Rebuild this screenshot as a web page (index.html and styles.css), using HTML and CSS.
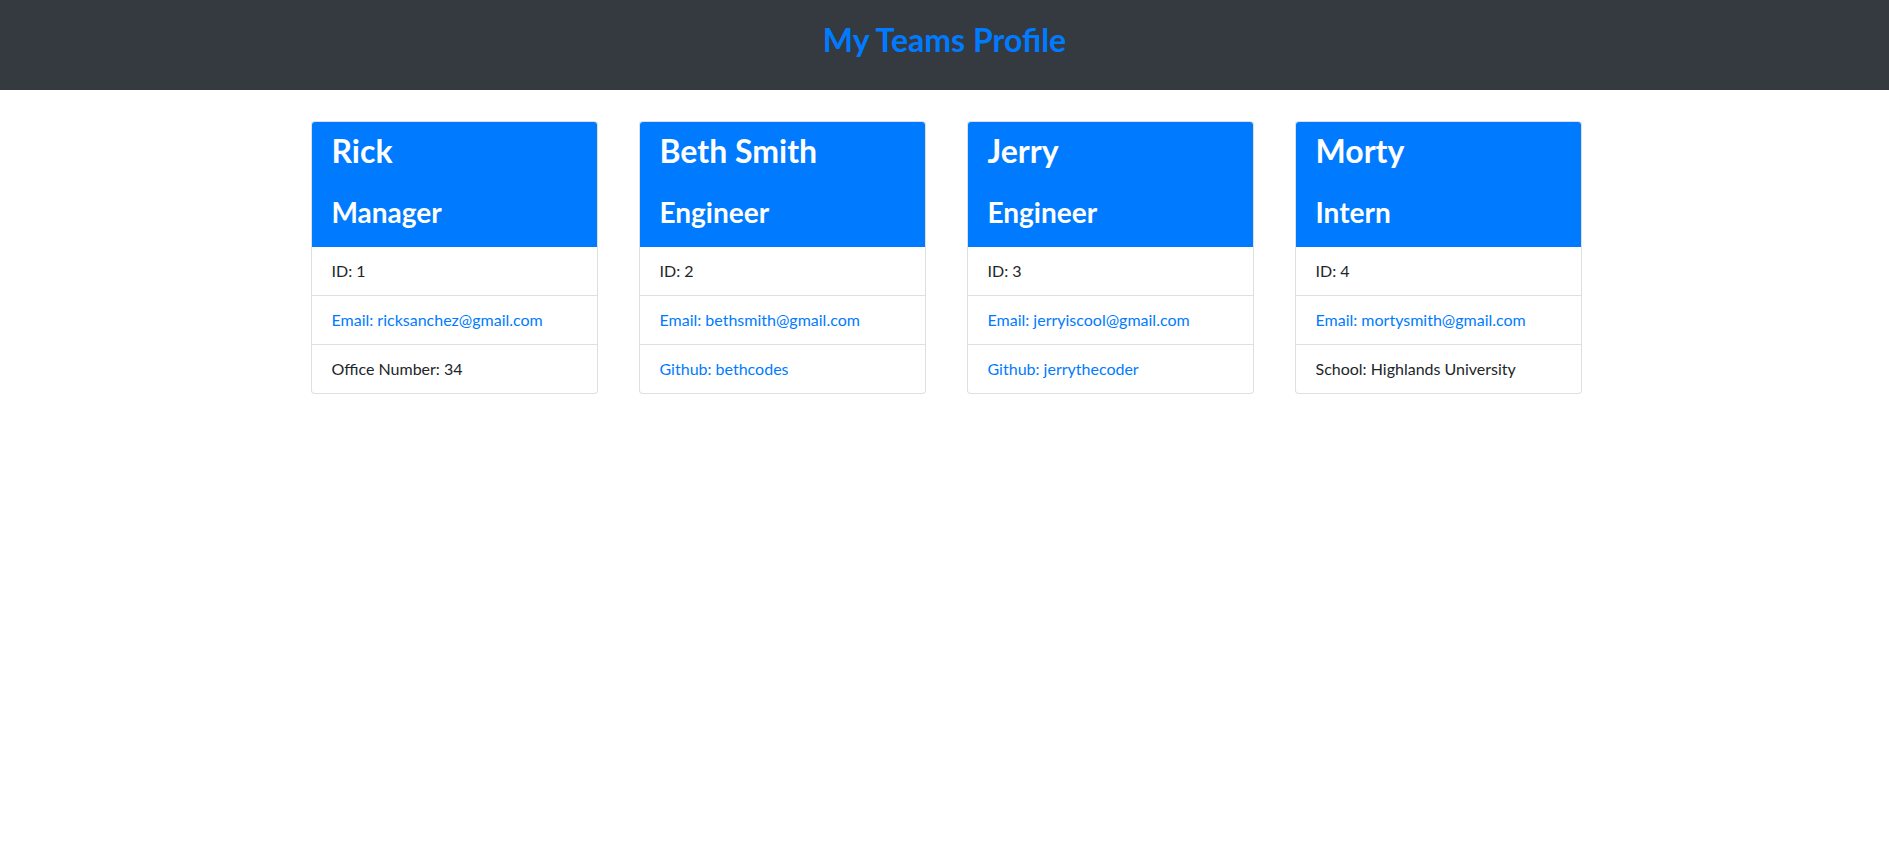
FILE: index.html
```html
<!DOCTYPE html>
<html lang="en">
<head>
<meta charset="UTF-8">
<title>My Teams Profile</title>
<link rel="stylesheet" href="styles.css">
</head>
<body>
<header class="topbar">
  <h1 class="topbar-title">My Teams Profile</h1>
</header>
<main class="team">
  <div class="card">
    <div class="card-head">
      <h2 class="card-name">Rick</h2>
      <h3 class="card-role">Manager</h3>
    </div>
    <ul class="card-list">
      <li class="card-item">ID: 1</li>
      <li class="card-item"><a class="card-link" href="#">Email: ricksanchez@gmail.com</a></li>
      <li class="card-item">Office Number: 34</li>
    </ul>
  </div>
  <div class="card">
    <div class="card-head">
      <h2 class="card-name">Beth Smith</h2>
      <h3 class="card-role">Engineer</h3>
    </div>
    <ul class="card-list">
      <li class="card-item">ID: 2</li>
      <li class="card-item"><a class="card-link" href="#">Email: bethsmith@gmail.com</a></li>
      <li class="card-item"><a class="card-link" href="#">Github: bethcodes</a></li>
    </ul>
  </div>
  <div class="card">
    <div class="card-head">
      <h2 class="card-name">Jerry</h2>
      <h3 class="card-role">Engineer</h3>
    </div>
    <ul class="card-list">
      <li class="card-item">ID: 3</li>
      <li class="card-item"><a class="card-link" href="#">Email: jerryiscool@gmail.com</a></li>
      <li class="card-item"><a class="card-link" href="#">Github: jerrythecoder</a></li>
    </ul>
  </div>
  <div class="card">
    <div class="card-head">
      <h2 class="card-name">Morty</h2>
      <h3 class="card-role">Intern</h3>
    </div>
    <ul class="card-list">
      <li class="card-item">ID: 4</li>
      <li class="card-item"><a class="card-link" href="#">Email: mortysmith@gmail.com</a></li>
      <li class="card-item">School: Highlands University</li>
    </ul>
  </div>
</main>
</body>
</html>
```

FILE: styles.css
```css
* {
  box-sizing: border-box;
}

body {
  margin: 0;
  font-family: Lato, "Noto Sans", sans-serif;
  font-size: 16px;
  line-height: 1.5;
  color: #212529;
  background: #fff;
}

.topbar {
  background: #343a40;
  padding: 20.5px 0 31.5px;
  text-align: center;
}

.topbar-title {
  margin: 0;
  font-size: 32px;
  line-height: 38px;
  font-weight: 700;
  color: #007bff;
}

.team {
  display: flex;
  justify-content: center;
  gap: 41px;
  padding: 31px 0 0 3px;
}

.card {
  width: 287px;
  border: 1px solid rgba(0, 0, 0, 0.125);
  border-radius: 4px;
  overflow: hidden;
  background: #fff;
}

.card-head {
  background: #007bff;
  color: #fff;
  padding: 10px 20px 17.1px;
}

.card-name {
  margin: 0 0 25.6px;
  font-size: 32px;
  line-height: 38.4px;
  font-weight: 700;
}

.card-role {
  margin: 0;
  font-size: 28px;
  line-height: 33.6px;
  font-weight: 700;
}

.card-list {
  list-style: none;
  margin: 0;
  padding: 0;
}

.card-item {
  padding: 12px 20px;
  line-height: 24px;
  border-top: 1px solid rgba(0, 0, 0, 0.125);
}

.card-item:first-child {
  border-top: 0;
}

.card-link {
  color: #007bff;
  text-decoration: none;
}
```
